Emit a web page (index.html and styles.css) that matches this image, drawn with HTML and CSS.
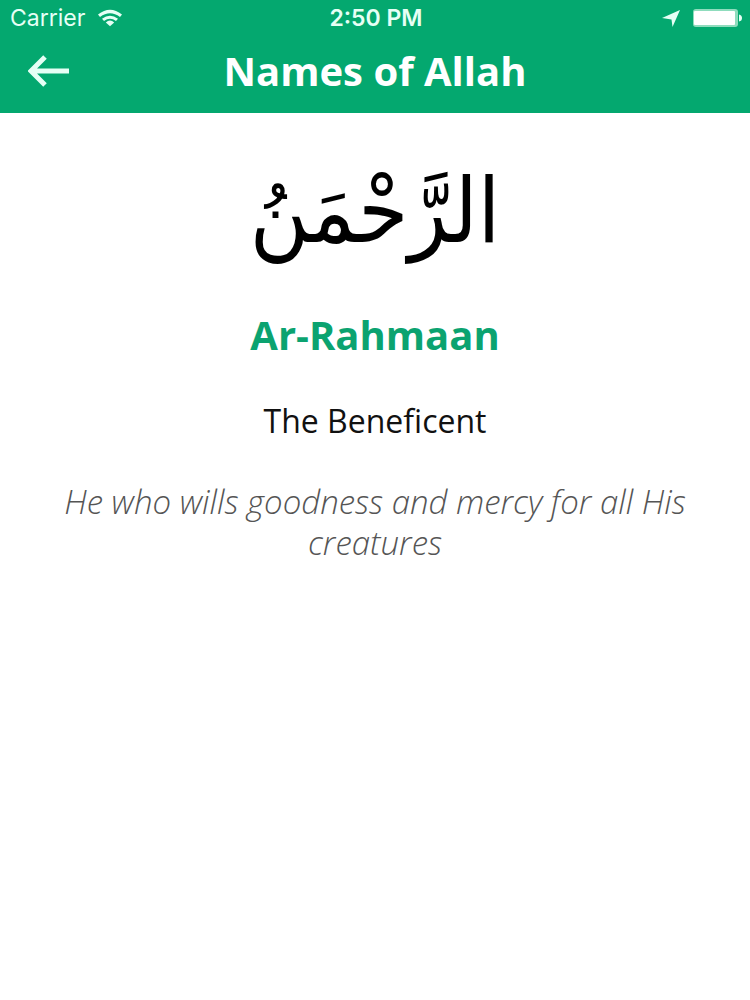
FILE: index.html
```html
<!DOCTYPE html>
<html lang="en">
<head>
    <meta charset="UTF-8">
    <meta name="viewport" content="width=device-width, initial-scale=1.0">
    <title>Names of Allah</title>
    <link rel="stylesheet" href="styles.css">
</head>
<body>
    <header class="header">
        <div class="status-bar">
            <div class="status-left">
                <span>Carrier</span>
                <svg class="wifi" width="26" height="18" viewBox="0 0 26 18" aria-hidden="true">
                    <path d="M1 5.500Q13 -4 25 5.500L23 8Q13 0.500 3 8Z"/>
                    <path d="M5 9.800Q13 3.500 21 9.800L19 12Q13 7.500 7 12Z"/>
                    <path d="M8.800 13.400Q13 9.800 17.200 13.400L13 17.200Z"/>
                </svg>
            </div>
            <div class="status-time">2:50 PM</div>
            <div class="status-right">
                <svg width="18" height="17" viewBox="0 0 18 17" aria-hidden="true">
                    <path d="M18 0L10.500 17L9.500 9.500L0 8Z"/>
                </svg>
                <svg width="50" height="18" viewBox="0 0 50 18" aria-hidden="true">
                    <rect class="battery-case" x="1" y="0" width="45" height="18" rx="3"/>
                    <rect class="battery-level" x="2" y="2" width="41" height="14" rx="1"/>
                    <path d="M47 5.500Q50 6 50 9T47 12.500Z"/>
                </svg>
            </div>
        </div>
        <div class="title-bar">
            <button class="back-btn" type="button" aria-label="Back">
                <svg width="42" height="32" viewBox="0 0 42 32" aria-hidden="true">
                    <path d="M17 2L3 16L17 30M3 16H41"/>
                </svg>
            </button>
            <h1>Names of Allah</h1>
        </div>
    </header>

    <main class="content">
        <p class="arabic" lang="ar" dir="rtl">الرَّحْمَنُ</p>
        <h2>Ar-Rahmaan</h2>
        <p class="meaning">The Beneficent</p>
        <p class="description">He who wills goodness and mercy for all His creatures</p>
    </main>
</body>
</html>
```

FILE: styles.css
```css
body {
    margin: 0;
    font-family: "Open Sans", "Noto Sans", sans-serif;
    background: #fff;
    color: #111;
}
.header {
    background-color: #04a86f;
    color: #fff;
}
.status-bar {
    display: grid;
    grid-template-columns: 1fr auto 1fr;
    align-items: center;
    height: 36px;
    padding: 0 8px 0 10px;
    font-family: Inter, Roboto, sans-serif;
    font-size: 23px;
    line-height: 36px;
    fill: #e6fff5;
    color: #e6fff5;
}
.status-left, .status-right {
    display: flex;
    align-items: center;
    gap: 12px;
}
.status-right {
    justify-content: flex-end;
}
.status-time {
    font-weight: 600;
}
.battery-case {
    fill: #8fdcbd;
}
.battery-level {
    fill: #fff;
}
.title-bar {
    display: grid;
    grid-template-columns: 72px 1fr 72px;
    align-items: center;
    height: 77px;
}
.back-btn {
    display: flex;
    padding: 0 0 8px 28px;
    border: none;
    background: none;
    cursor: pointer;
}
.back-btn path {
    fill: none;
    stroke: #e6fff5;
    stroke-width: 5;
}
h1 {
    margin: 0;
    padding-bottom: 8px;
    font-size: 40px;
    line-height: 48px;
    text-align: center;
}
.content {
    padding: 32px 40px;
    text-align: center;
}
.arabic {
    margin: 0;
    font-family: "DejaVu Sans Condensed", "DejaVu Sans", sans-serif;
    font-size: 90px;
    line-height: 132px;
    color: #000;
}
h2 {
    margin: 32px 0 40px;
    font-size: 40px;
    line-height: 52px;
    color: #0ba370;
}
.meaning {
    margin: 0 0 40px;
    font-size: 32px;
    line-height: 40px;
}
.description {
    margin: 0;
    font-size: 33px;
    font-style: italic;
    font-weight: 300;
    line-height: 41px;
    color: #555;
}
```
